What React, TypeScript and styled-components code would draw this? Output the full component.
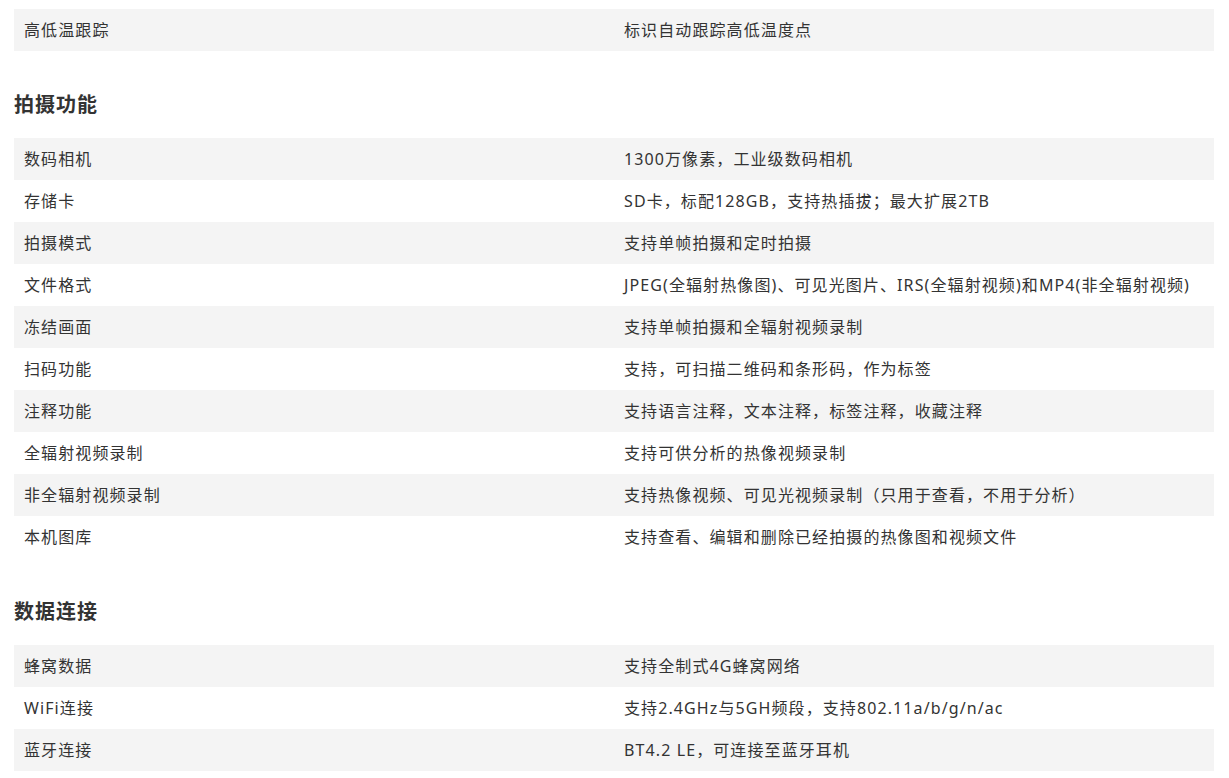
import React from "react";
import styled, { createGlobalStyle } from "styled-components";

const Global = createGlobalStyle`
  html, body { margin: 0; padding: 0; background: #fff; }
  body { font-family: "Noto Sans", "Noto Sans CJK SC", sans-serif; color: #333; }
`;

const Page = styled.div`
  padding: 9px 15px 0 14px;
  width: 1200px;
`;

const Heading = styled.h3`
  margin: 38px 0 19px;
  font-family: "Noto Sans CJK SC", sans-serif;
  font-size: 20px;
  line-height: 30px;
  font-weight: 700;
  color: #333;
  letter-spacing: 1px;
`;

const Table = styled.div`
  display: flex;
  flex-direction: column;
`;

const Row = styled.div<{ $shade: boolean }>`
  display: grid;
  grid-template-columns: 600px 600px;
  height: 42px;
  align-items: center;
  background: ${(p) => (p.$shade ? "#f4f4f4" : "#fff")};
`;

const Cell = styled.div`
  padding: 0 0 2px 10px;
  font-size: 16px;
  letter-spacing: 1.1px;
  color: #333;
  white-space: nowrap;
`;

type Section = { title?: string; rows: [string, string][] };

const sections: Section[] = [
  { rows: [["高低温跟踪", "标识自动跟踪高低温度点"]] },
  {
    title: "拍摄功能",
    rows: [
      ["数码相机", "1300万像素，工业级数码相机"],
      ["存储卡", "SD卡，标配128GB，支持热插拔；最大扩展2TB"],
      ["拍摄模式", "支持单帧拍摄和定时拍摄"],
      ["文件格式", "JPEG(全辐射热像图)、可见光图片、IRS(全辐射视频)和MP4(非全辐射视频)"],
      ["冻结画面", "支持单帧拍摄和全辐射视频录制"],
      ["扫码功能", "支持，可扫描二维码和条形码，作为标签"],
      ["注释功能", "支持语言注释，文本注释，标签注释，收藏注释"],
      ["全辐射视频录制", "支持可供分析的热像视频录制"],
      ["非全辐射视频录制", "支持热像视频、可见光视频录制（只用于查看，不用于分析）"],
      ["本机图库", "支持查看、编辑和删除已经拍摄的热像图和视频文件"],
    ],
  },
  {
    title: "数据连接",
    rows: [
      ["蜂窝数据", "支持全制式4G蜂窝网络"],
      ["WiFi连接", "支持2.4GHz与5GH频段，支持802.11a/b/g/n/ac"],
      ["蓝牙连接", "BT4.2 LE，可连接至蓝牙耳机"],
    ],
  },
];

export default function App() {
  return (
    <>
      <Global />
      <Page>
        {sections.map((s, si) => (
          <React.Fragment key={si}>
            {s.title && <Heading>{s.title}</Heading>}
            <Table>
              {s.rows.map(([k, v], i) => (
                <Row key={i} $shade={i % 2 === 0}>
                  <Cell>{k}</Cell>
                  <Cell>{v}</Cell>
                </Row>
              ))}
            </Table>
          </React.Fragment>
        ))}
      </Page>
    </>
  );
}
